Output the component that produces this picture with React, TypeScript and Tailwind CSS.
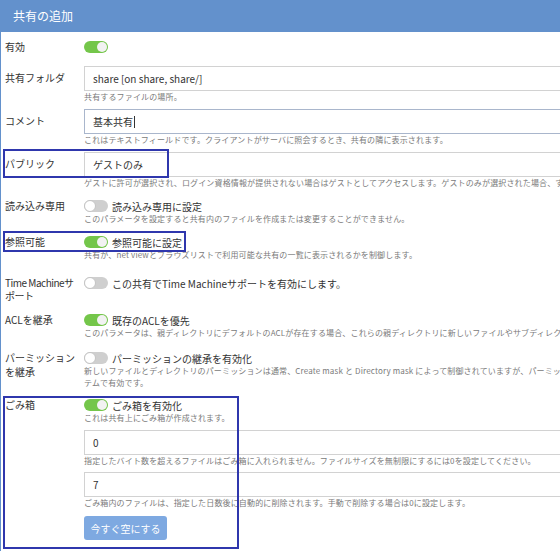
import type { ReactNode } from 'react'

const FONT = { fontFamily: '"Noto Sans CJK JP", "Noto Sans", sans-serif' }

function Toggle({ on }: { on: boolean }) {
  return on ? (
    <span className="relative inline-flex w-[24px] h-[12px] rounded-full bg-[#74c64a] shrink-0">
      <span className="absolute right-[1px] top-[1px] w-[10px] h-[10px] rounded-full bg-[#f2f2f2]" />
    </span>
  ) : (
    <span className="relative inline-flex w-[24px] h-[12px] rounded-full bg-[#cfcfcf] shrink-0">
      <span className="absolute left-0 top-0 w-[12px] h-[12px] rounded-full bg-white border border-[#c4c4c4]" />
    </span>
  )
}

function Help({ children }: { children: ReactNode }) {
  return (
    <div className="text-[8px] leading-[12px] tracking-[0.15px] text-[#7a7a7a] whitespace-nowrap">{children}</div>
  )
}

function Input({ value, focus, caret }: { value: string; focus?: boolean; caret?: boolean }) {
  return (
    <div
      className={`h-[25px] flex items-center pl-[8px] text-[10px] text-[#333] bg-white border ${
        focus ? 'border-[#a9b6cc]' : 'border-[#d2d2d2]'
      } w-[620px]`}
    >
      {value}
      {caret && <span className="inline-block w-px h-[12px] bg-[#333] ml-px" />}
    </div>
  )
}

function Row({ label, mt, children }: { label: ReactNode; mt: string; children: ReactNode }) {
  return (
    <div className={`flex ${mt}`}>
      <div className="w-[79px] shrink-0 text-[10px] leading-[14px] text-[#333]">{label}</div>
      <div className="flex-1 min-w-0">{children}</div>
    </div>
  )
}

function ToggleLine({ on, text }: { on: boolean; text: string }) {
  return (
    <div className="flex items-center gap-[4px] h-[14px] text-[10px] text-[#333] whitespace-nowrap">
      <Toggle on={on} />
      <span>{text}</span>
    </div>
  )
}

export default function App() {
  return (
    <div style={FONT} className="w-[560px] h-[551px] overflow-hidden bg-white border-l border-[#6391cc]">
      {/* Header */}
      <div className="h-[32px] bg-[#6391cc] flex items-center pl-[12px] text-[12px] text-white">共有の追加</div>

      <div className="pl-[4px] pt-px">
        <Row label="有効" mt="mt-[7px]">
          <ToggleLine on text="" />
        </Row>

        <Row label={<div className="pt-[5px]">共有フォルダ</div>} mt="mt-[12px]">
          <Input value="share [on share, share/]" />
          <Help>共有するファイルの場所。</Help>
        </Row>

        <Row label={<div className="pt-[5px]">コメント</div>} mt="mt-[6px]">
          <Input value="基本共有" focus caret />
          <Help>これはテキストフィールドです。クライアントがサーバに照会するとき、共有の隣に表示されます。</Help>
        </Row>

        <div className="relative">
          <Row label={<div className="pt-[5px]">パブリック</div>} mt="mt-[6px]">
            <Input value="ゲストのみ" />
            <Help>
              ゲストに許可が選択され、ログイン資格情報が提供されない場合はゲストとしてアクセスします。ゲストのみが選択された場合、すべてのユーザーはゲストとしてアクセスします。
            </Help>
          </Row>
          <div className="absolute left-[-2px] top-[-3px] w-[166px] h-[29px] border-2 border-[#2f37ad]" />
        </div>

        <Row label="読み込み専用" mt="mt-[10px]">
          <ToggleLine on={false} text="読み込み専用に設定" />
          <Help>このパラメータを設定すると共有内のファイルを作成または変更することができません。</Help>
        </Row>

        <div className="relative">
          <Row label="参照可能" mt="mt-[10px]">
            <ToggleLine on text="参照可能に設定" />
            <Help>共有が、net viewとブラウズリストで利用可能な共有の一覧に表示されるかを制御します。</Help>
          </Row>
          <div className="absolute left-[-2px] top-[-4px] w-[183px] h-[21px] border-2 border-[#2f37ad]" />
        </div>

        <Row
          label={
            <div className="leading-[13px] tracking-[-0.5px]">
              Time Machineサ
              <br />
              ポート
            </div>
          }
          mt="mt-[15px]"
        >
          <ToggleLine on={false} text="この共有でTime Machineサポートを有効にします。" />
        </Row>

        <Row label="ACLを継承" mt="mt-[11px]">
          <ToggleLine on text="既存のACLを優先" />
          <Help>
            このパラメータは、親ディレクトリにデフォルトのACLが存在する場合、これらの親ディレクトリに新しいファイルやサブディレクトリを作成するときに使用されます。
          </Help>
        </Row>

        <Row
          label={
            <div className="leading-[14px]">
              パーミッション
              <br />
              を継承
            </div>
          }
          mt="mt-[12px]"
        >
          <ToggleLine on={false} text="パーミッションの継承を有効化" />
          <Help>
            新しいファイルとディレクトリのパーミッションは通常、Create mask と Directory mask によって制御されていますが、パーミッションの継承はシス
          </Help>
          <Help>テムで有効です。</Help>
        </Row>

        <div className="relative">
          <Row label="ごみ箱" mt="mt-[9px]">
            <ToggleLine on text="ごみ箱を有効化" />
            <Help>これは共有上にごみ箱が作成されます。</Help>
            <div className="mt-[6px]">
              <Input value="0" />
              <Help>指定したバイト数を超えるファイルはごみ箱に入れられません。ファイルサイズを無制限にするには0を設定してください。</Help>
            </div>
            <div className="mt-[5px]">
              <Input value="7" />
              <Help>ごみ箱内のファイルは、指定した日数後に自動的に削除されます。手動で削除する場合は0に設定します。</Help>
            </div>
            <button className="mt-[7px] w-[83px] h-[24px] rounded-[3px] bg-[#7ea9e1] text-white text-[10px]">
              今すぐ空にする
            </button>
          </Row>
          <div className="absolute left-[-2px] top-[-2px] w-[236px] h-[153px] border-2 border-[#2f37ad]" />
        </div>
      </div>
    </div>
  )
}
